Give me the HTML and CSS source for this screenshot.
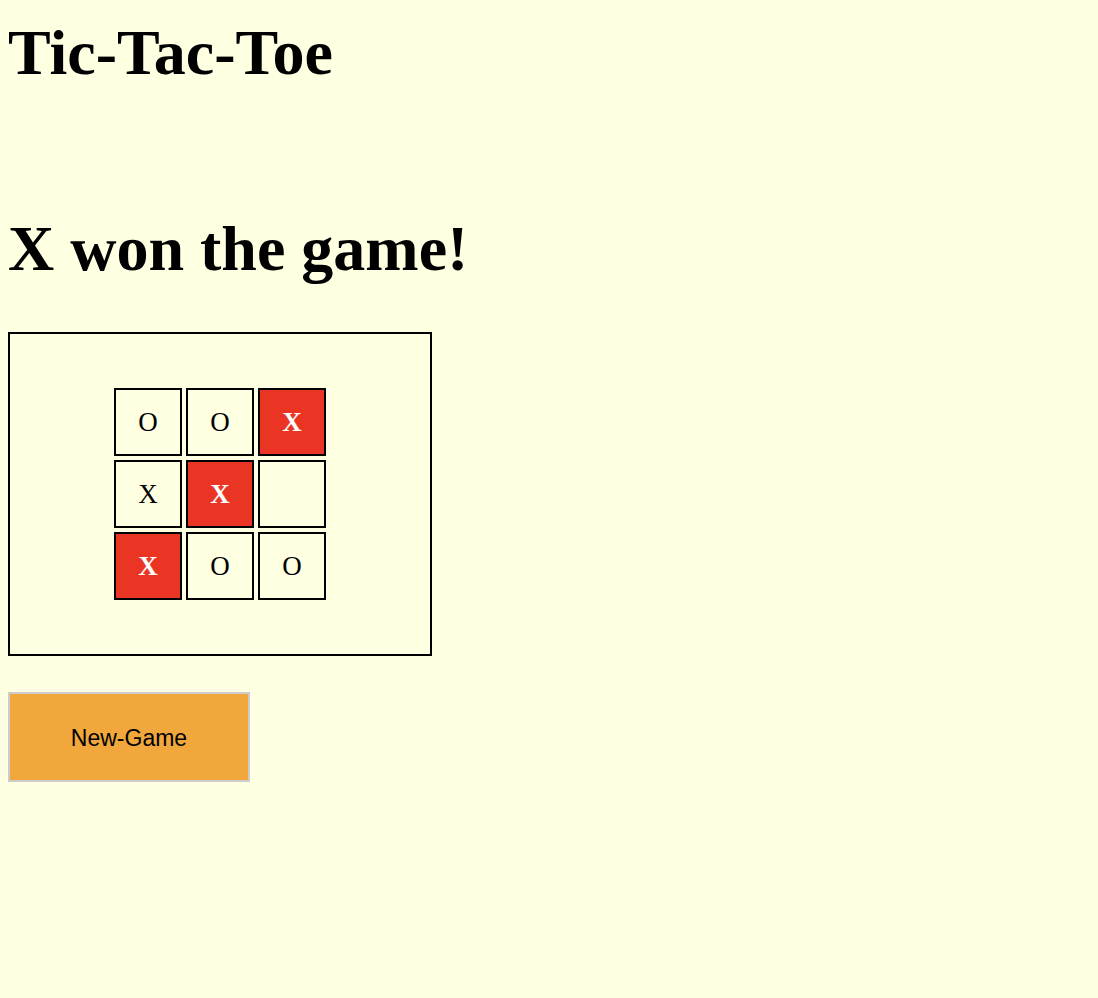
FILE: index.html
```html
<!DOCTYPE html>
<html>
<head>
<meta charset="utf-8">
<title>Tic-Tac-Toe</title>
<link rel="stylesheet" href="styles.css">
</head>
<body>
<h1 class="title">Tic-Tac-Toe</h1>
<h2 class="status">X won the game!</h2>
<div class="board-wrap">
  <div class="board">
    <div class="cell">O</div>
    <div class="cell">O</div>
    <div class="cell win">X</div>
    <div class="cell">X</div>
    <div class="cell win">X</div>
    <div class="cell"></div>
    <div class="cell win">X</div>
    <div class="cell">O</div>
    <div class="cell">O</div>
  </div>
</div>
<button class="new-game">New-Game</button>
</body>
</html>
```
FILE: styles.css
```css
html {
  background: #ffffe2;
}
body {
  margin: 8px;
  padding-top: 8px;
  font-family: "Liberation Serif", "Times New Roman", serif;
  color: #000;
}
.title {
  margin: 0;
  font-size: 64px;
  font-weight: bold;
  line-height: normal;
}
.status {
  margin: 122px 0 0 0;
  font-size: 64px;
  font-weight: bold;
  line-height: normal;
}
.board-wrap {
  margin-top: 46px;
  width: 420px;
  height: 320px;
  border: 2px solid #000;
  display: flex;
  align-items: center;
  justify-content: center;
}
.board {
  display: grid;
  grid-template-columns: repeat(3, 68px);
  grid-template-rows: repeat(3, 68px);
  gap: 4px;
}
.cell {
  box-sizing: border-box;
  border: 2px solid #000;
  display: flex;
  align-items: center;
  justify-content: center;
  font-size: 27px;
  font-family: "Liberation Serif", "Times New Roman", serif;
}
.cell.win {
  background: #ea3524;
  color: #fff;
  font-weight: bold;
}
.new-game {
  display: block;
  margin-top: 36px;
  width: 242px;
  height: 90px;
  background: #f2a73d;
  border: 2px solid #cccccc;
  font-family: "Liberation Sans", Arial, sans-serif;
  font-size: 23px;
  color: #000;
  padding: 0;
  padding-top: 2px;
}
```
